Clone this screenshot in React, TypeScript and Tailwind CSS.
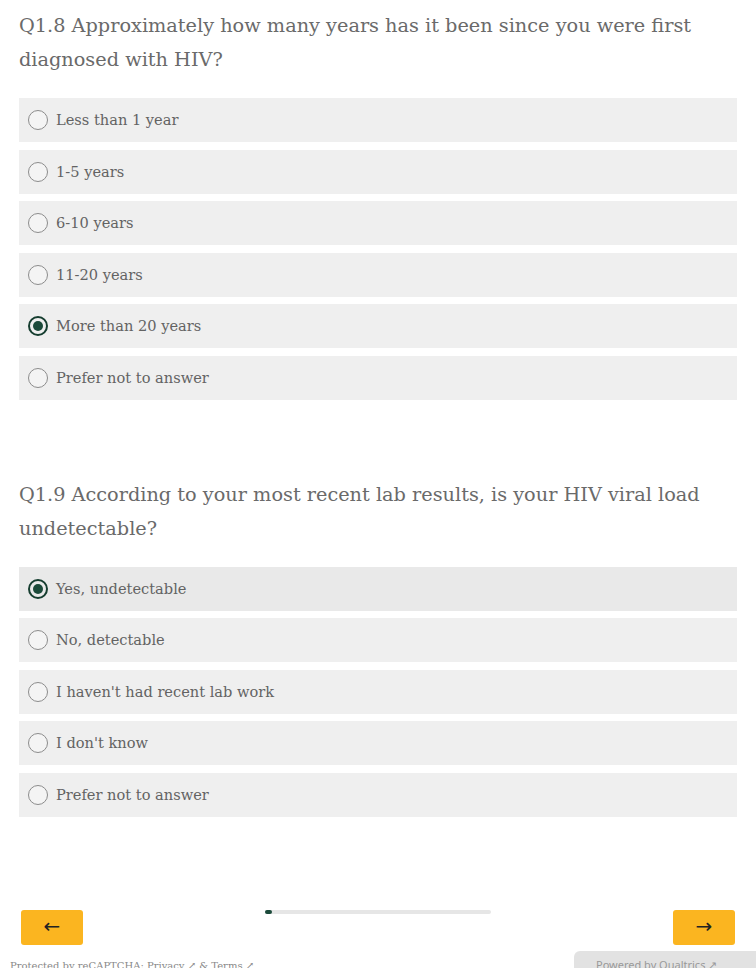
import React from "react";

const serif = { fontFamily: '"DejaVu Serif", "Liberation Serif", serif' };

function Radio({ checked }: { checked: boolean }) {
  return checked ? (
    <span className="flex h-[20px] w-[20px] shrink-0 items-center justify-center rounded-full border-[2.5px] border-[#153d2f]">
      <span className="h-[10px] w-[10px] rounded-full bg-[#1b4a3a]" />
    </span>
  ) : (
    <span className="h-[20px] w-[20px] shrink-0 rounded-full border-[1.5px] border-[#8c8c8c] bg-[#f4f4f4]" />
  );
}

function Option({ label, checked, hover }: { label: string; checked?: boolean; hover?: boolean }) {
  return (
    <div className={`flex h-[44px] items-center gap-[8px] pl-[9px] ${hover ? "bg-[#e9e9e9]" : "bg-[#efefef]"}`}>
      <Radio checked={!!checked} />
      <span className="text-[14.6px] text-[#636363]" style={serif}>{label}</span>
    </div>
  );
}

function Question({ title, options, selected, hover }: { title: string; options: string[]; selected: number; hover?: boolean }) {
  return (
    <div>
      <h2 className="text-[19.3px] leading-[34px] text-[#6a6a6a] pr-[30px]" style={serif}>{title}</h2>
      <div className="mt-[21px] flex flex-col gap-[7.5px]">
        {options.map((o, i) => (
          <Option key={o} label={o} checked={i === selected} hover={hover && i === selected} />
        ))}
      </div>
    </div>
  );
}

export default function App() {
  return (
    <div className="relative h-[968px] w-[756px] overflow-hidden bg-white">
      <div className="px-[19px] pt-[9px]">
        <Question
          title="Q1.8 Approximately how many years has it been since you were first diagnosed with HIV?"
          options={["Less than 1 year", "1-5 years", "6-10 years", "11-20 years", "More than 20 years", "Prefer not to answer"]}
          selected={4}
        />
        <div className="h-[78px]" />
        <Question
          title="Q1.9 According to your most recent lab results, is your HIV viral load undetectable?"
          options={["Yes, undetectable", "No, detectable", "I haven't had recent lab work", "I don't know", "Prefer not to answer"]}
          selected={0}
          hover
        />
      </div>
      <div className="mt-[93px] flex items-start justify-between px-[21px]">
        <button className="flex h-[35px] w-[62px] items-center justify-center rounded-[3px] bg-[#fbb520] pb-[2px] text-[20px] text-[#222]" style={{ fontFamily: '"DejaVu Sans", sans-serif' }}>
          ←
        </button>
        <div className="mt-[0px] h-[4px] w-[226px] rounded-full bg-[#e6e6e6]">
          <div className="h-[4px] w-[7px] rounded-full bg-[#1b4a3a]" />
        </div>
        <button className="flex h-[35px] w-[62px] items-center justify-center rounded-[3px] bg-[#fbb520] pb-[2px] text-[20px] text-[#222]" style={{ fontFamily: '"DejaVu Sans", sans-serif' }}>
          →
        </button>
      </div>
      <div className="absolute bottom-0 left-0 right-0 flex items-end justify-between">
        <div className="pl-[10px] text-[10px] leading-[12px] text-[#888] translate-y-[4px]" style={serif}>
          Protected by reCAPTCHA: Privacy ↗ &amp; Terms ↗
        </div>
        <div className="h-[17px] w-[182px] rounded-tl-[6px] bg-[#e2e2e2] pl-[22px] pt-[7px] text-[11px] leading-[14px] text-[#999]" style={{ fontFamily: '"Noto Sans", sans-serif' }}>
          Powered by Qualtrics ↗
        </div>
      </div>
    </div>
  );
}
